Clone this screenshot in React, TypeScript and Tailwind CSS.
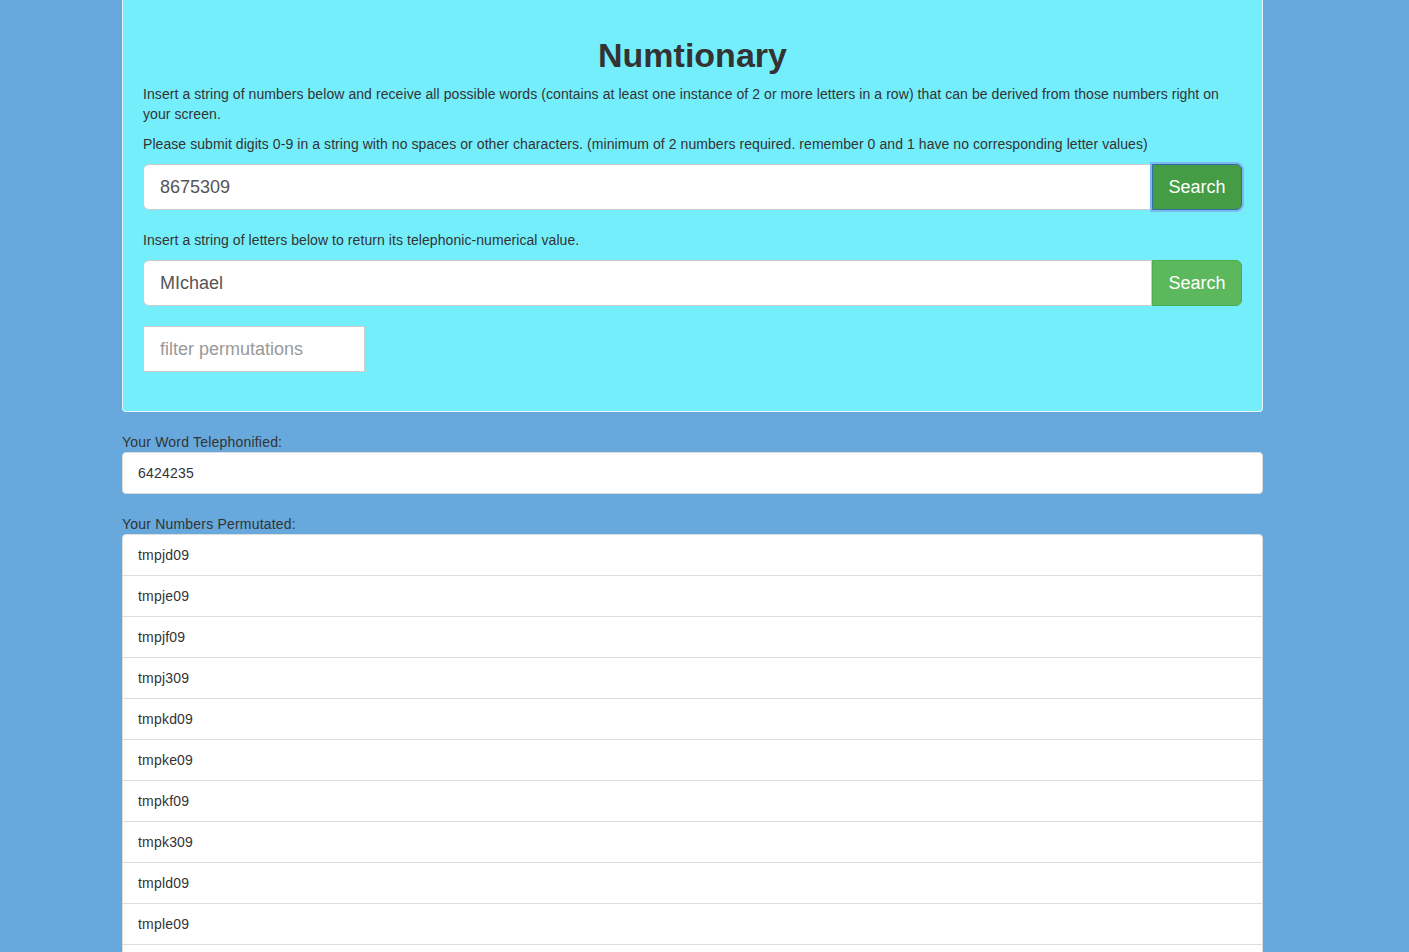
import React from "react";

const rows = [
  "tmpjd09",
  "tmpje09",
  "tmpjf09",
  "tmpj309",
  "tmpkd09",
  "tmpke09",
  "tmpkf09",
  "tmpk309",
  "tmpld09",
  "tmple09",
  "tmplf09",
  "tmpl309",
];

export default function App() {
  return (
    <div
      className="min-h-[952px] bg-[#67a9dc] pl-[122px] text-[14px] leading-[20px] text-[#333]"
      style={{ fontFamily: '"Liberation Sans", Arial, sans-serif' }}
    >
      <div className="w-[1141px]">
        <div className="rounded-b-[4px] border border-t-0 border-[#e6f6fa] bg-[#75eefb] px-[20px] pt-[35px] pb-[39px]">
          <h1 className="mb-[9px] text-center text-[34px] font-bold leading-[40px] text-[#333]">
            Numtionary
          </h1>
          <p className="mb-[10px] tracking-[0.07px]">
            Insert a string of numbers below and receive all possible words (contains at least one instance of 2 or more letters in a row) that can be derived from those numbers right on your screen.
          </p>
          <p className="mb-[10px] tracking-[0.07px]">
            Please submit digits 0-9 in a string with no spaces or other characters. (minimum of 2 numbers required. remember 0 and 1 have no corresponding letter values)
          </p>
          <div className="flex h-[46px]">
            <div className="flex flex-1 items-center rounded-l-[6px] border border-[#ccc] bg-white px-[16px] text-[18px] text-[#555]">
              8675309
            </div>
            <div className="flex w-[90px] items-center justify-center rounded-r-[6px] border border-[#2f6ea0] bg-[#449d44] text-[18px] text-white shadow-[0_0_0_2px_#7fb8ef]">
              Search
            </div>
          </div>
          <p className="mt-[20px] mb-[10px] tracking-[0.07px]">
            Insert a string of letters below to return its telephonic-numerical value.
          </p>
          <div className="flex h-[46px]">
            <div className="flex flex-1 items-center rounded-l-[6px] border border-[#ccc] bg-white px-[16px] text-[18px] text-[#555]">
              MIchael
            </div>
            <div className="flex w-[90px] items-center justify-center rounded-r-[6px] border border-[#4cae4c] bg-[#5cb85c] text-[18px] text-white">
              Search
            </div>
          </div>
          <div className="mt-[20px] flex h-[46px] w-[222px] items-center border border-[#ccc] bg-white px-[16px] text-[18px] text-[#999]">
            filter permutations
          </div>
        </div>

        <div className="mt-[20px] tracking-[0.2px]">Your Word Telephonified:</div>
        <div className="h-[42px] rounded-[4px] border border-[#ddd] bg-white px-[15px] py-[10px] tracking-[0.2px]">
          6424235
        </div>

        <div className="mt-[20px] tracking-[0.2px]">Your Numbers Permutated:</div>
        <div className="flex flex-col">
          {rows.map((r, i) => (
            <div
              key={r}
              className={
                "h-[42px] shrink-0 border border-[#ddd] bg-white px-[15px] py-[10px] tracking-[0.2px] " +
                (i === 0 ? "rounded-t-[4px] " : "-mt-[1px] ")
              }
            >
              {r}
            </div>
          ))}
        </div>
      </div>
    </div>
  );
}
